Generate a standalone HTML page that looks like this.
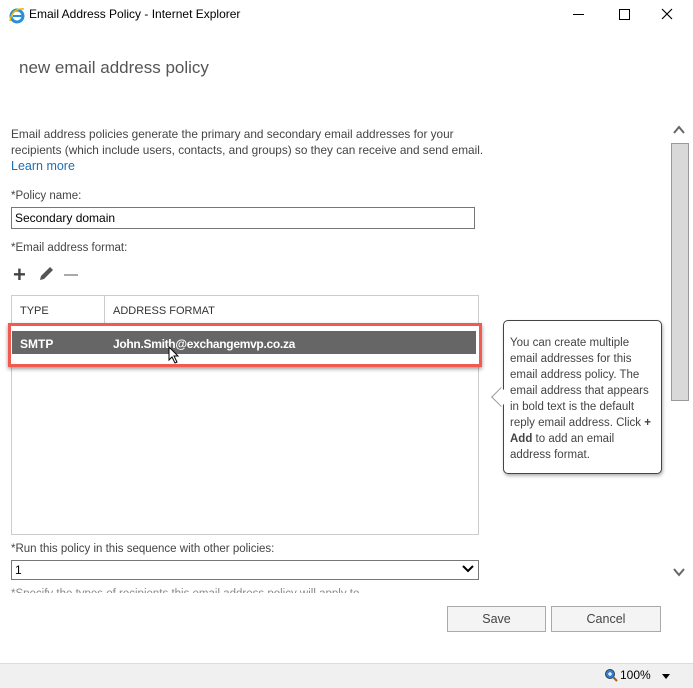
<!DOCTYPE html>
<html><head><style>
body{margin:0;width:693px;height:687px;background:#fff;font-family:"Liberation Sans",sans-serif;position:relative;overflow:hidden;color:#333}
.a{position:absolute}
.t{font-size:11.5px;color:#444}
</style></head><body>
<svg class="a" style="left:8px;top:6px" width="18" height="18" viewBox="0 0 18 18"><circle cx="9" cy="10" r="6" fill="none" stroke="#2a8fd8" stroke-width="3"/><rect x="5" y="9" width="9" height="2" fill="#2a8fd8"/><path d="M2 15 Q4 2 16 3" fill="none" stroke="#f0b400" stroke-width="1.5"/></svg>
<div class="a" style="left:29px;top:7px;font-size:12px;color:#000">Email Address Policy - Internet Explorer</div>
<div class="a" style="left:573px;top:14px;width:11px;height:1px;background:#000"></div>
<div class="a" style="left:619px;top:9px;width:9px;height:9px;border:1px solid #000"></div>
<svg class="a" style="left:661px;top:8px" width="12" height="12"><path d="M1 1 L11 11 M11 1 L1 11" stroke="#000" stroke-width="1.2"/></svg>
<div class="a" style="left:19px;top:58px;font-size:17px;color:#555">new email address policy</div>
<div class="a t" style="left:11px;top:126px;line-height:16px;font-size:11.8px">Email address policies generate the primary and secondary email addresses for your<br>recipients (which include users, contacts, and groups) so they can receive and send email.<br><span style="color:#1f6fb5;font-size:12.5px">Learn more</span></div>
<div class="a t" style="left:11px;top:190px">*Policy name:</div>
<div class="a" style="left:11px;top:207px;width:459px;height:20px;border:1px solid #777;font-size:12px;color:#000;line-height:20px;padding-left:3px;box-sizing:content-box">Secondary domain</div>
<div class="a t" style="left:11px;top:242px">*Email address format:</div>
<div class="a" style="left:13px;top:262px;font-size:22px;color:#444;font-weight:bold">+</div>
<svg class="a" style="left:38px;top:266px" width="18" height="16"><path d="M2 14 L3 10 L12 1 L15 4 L6 13 Z" fill="#555"/></svg>
<div class="a" style="left:64px;top:274px;width:14px;height:2px;background:#aaa"></div>
<div class="a" style="left:11px;top:295px;width:466px;height:238px;border:1px solid #ccc"></div>
<div class="a" style="left:104px;top:296px;width:1px;height:30px;background:#ccc"></div>
<div class="a" style="left:20px;top:305px;font-size:11px;color:#333">TYPE</div>
<div class="a" style="left:113px;top:305px;font-size:11px;color:#333">ADDRESS FORMAT</div>
<div class="a" style="left:8px;top:323px;width:468px;height:38px;border:3px solid #f05a50;box-shadow:0 2px 4px rgba(0,0,0,.4);background:#fff"></div>
<div class="a" style="left:12px;top:331px;width:464px;height:23px;background:#666"></div>
<div class="a" style="left:20px;top:337px;font-size:12px;color:#fff;font-weight:bold">SMTP</div>
<div class="a" style="left:113px;top:337px;font-size:12px;color:#fff;font-weight:bold;letter-spacing:-0.3px">John.Smith@exchangemvp.co.za</div>
<svg class="a" style="left:168px;top:346px" width="12" height="18"><path d="M1 1 L1 14 L4 11 L7 17 L9 16 L6 10 L10 10 Z" fill="#fff" stroke="#000"/></svg>
<div class="a" style="left:503px;top:320px;width:157px;height:152px;border:1px solid #444;border-radius:5px;box-shadow:1px 2px 3px rgba(0,0,0,.3);background:#fff"></div>
<div class="a" style="left:494px;top:390px;width:13px;height:13px;background:#fff;border-left:1px solid #999;border-bottom:1px solid #999;transform:rotate(45deg)"></div>
<div class="a t" style="left:510px;top:335px;line-height:16px;font-size:11.5px">You can create multiple<br>email addresses for this<br>email address policy. The<br>email address that appears<br>in bold text is the default<br>reply email address. Click <b>+</b><br><b>Add</b> to add an email<br>address format.</div>
<div class="a t" style="left:11px;top:543px">*Run this policy in this sequence with other policies:</div>
<div class="a" style="left:11px;top:560px;width:463px;height:18px;border:1px solid #777;font-size:12px;color:#000;line-height:18px;padding-left:3px">1</div>
<svg class="a" style="left:462px;top:565px" width="12" height="8"><path d="M1 1 L6 6 L11 1" fill="none" stroke="#000" stroke-width="2"/></svg>
<div class="a t" style="left:11px;top:588px;height:5px;overflow:hidden;color:#888">*Specify the types of recipients this email address policy will apply to</div>
<svg class="a" style="left:673px;top:125px" width="12" height="10"><path d="M1 8 L6 2 L11 8" fill="none" stroke="#666" stroke-width="2"/></svg>
<div class="a" style="left:671px;top:143px;width:16px;height:256px;background:#d9d9d9;border:1px solid #999"></div>
<svg class="a" style="left:673px;top:567px" width="12" height="10"><path d="M1 2 L6 8 L11 2" fill="none" stroke="#666" stroke-width="2"/></svg>
<div class="a" style="left:447px;top:606px;width:97px;height:24px;border:1px solid #aaa;background:#f4f4f4;text-align:center;line-height:24px;font-size:12.5px;color:#444">Save</div>
<div class="a" style="left:551px;top:606px;width:108px;height:24px;border:1px solid #aaa;background:#f4f4f4;text-align:center;line-height:24px;font-size:12.5px;color:#444">Cancel</div>
<div class="a" style="left:0;top:663px;width:693px;height:24px;background:#f0f0f0;border-top:1px solid #ddd"></div>
<svg class="a" style="left:604px;top:668px" width="14" height="14"><circle cx="6" cy="6" r="4.5" fill="#3a7bd5" stroke="#245" stroke-width="1"/><path d="M4 6h4M6 4v4" stroke="#fff" stroke-width="1.2"/><path d="M9 9 L13 13" stroke="#a06020" stroke-width="2"/></svg>
<div class="a" style="left:620px;top:668px;font-size:12px;color:#000">100%</div>
<div class="a" style="left:662px;top:674px;border:4px solid transparent;border-top:5px solid #000"></div>
</body></html>
